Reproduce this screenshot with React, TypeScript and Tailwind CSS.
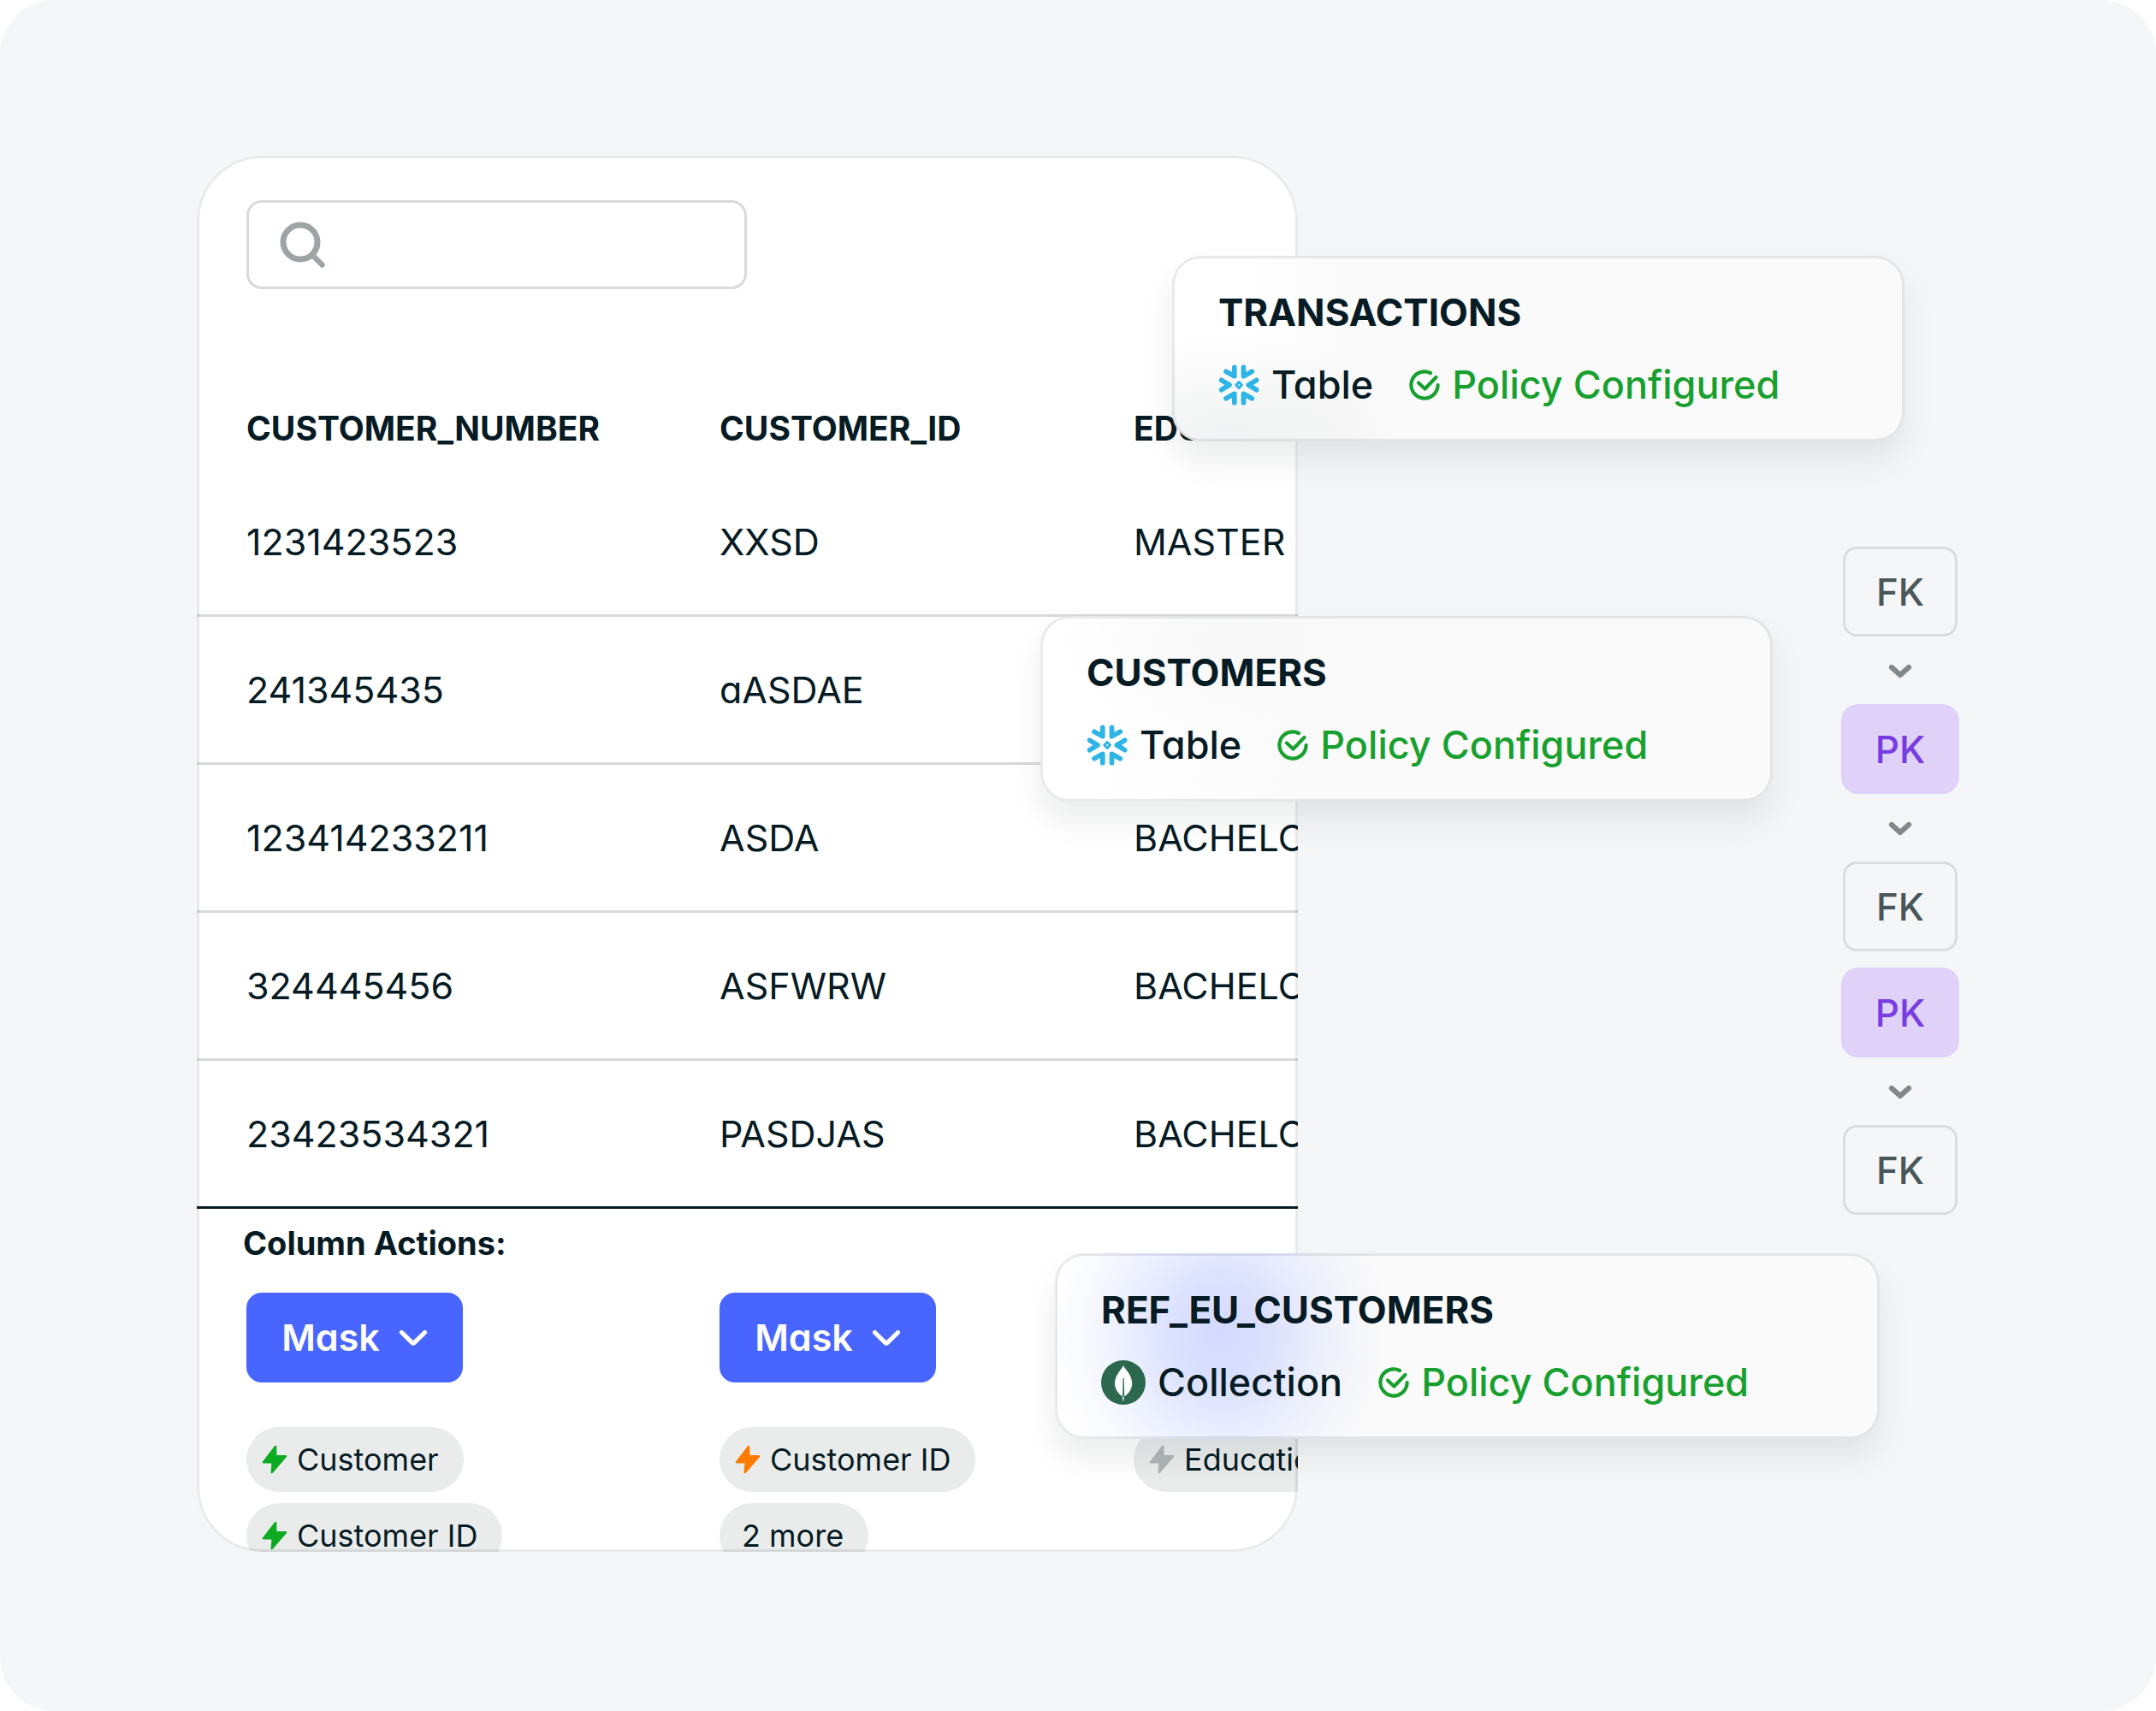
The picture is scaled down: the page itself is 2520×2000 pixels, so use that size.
import type { ReactNode } from 'react';

const rows = [
  { number: '1231423523', id: 'XXSD', education: 'MASTER' },
  { number: '241345435', id: 'aASDAE', education: 'BACHELOR' },
  { number: '123414233211', id: 'ASDA', education: 'BACHELOR' },
  { number: '324445456', id: 'ASFWRW', education: 'BACHELOR' },
  { number: '23423534321', id: 'PASDJAS', education: 'BACHELOR' },
];

function SearchIcon() {
  return (
    <svg className="size-[56px] shrink-0" viewBox="0 0 56 56" fill="none" stroke="#9da4a5" aria-hidden="true">
      <circle cx="26" cy="25" r="20" strokeWidth="7" />
      <path d="M41 41 51.5 51.5" strokeWidth="6.4" strokeLinecap="round" />
    </svg>
  );
}

function ChevronIcon() {
  return (
    <svg className="h-[20px] w-[34px]" viewBox="0 0 34 20" fill="none" aria-hidden="true">
      <path d="M3.5 3.5 15.900 15.600a1.600 1.600 0 0 0 2.200 0L30.500 3.500" stroke="currentColor" strokeWidth="5.2" strokeLinecap="round" />
    </svg>
  );
}

function ArrowDown() {
  return (
    <div className="flex h-[79px] items-center justify-center pt-[3px]">
      <svg className="h-[18px] w-[28px]" viewBox="0 0 28 18" fill="none" aria-hidden="true">
        <path d="m4 4 10 9 10-9" stroke="#7f888a" strokeWidth="6.2" strokeLinecap="round" strokeLinejoin="round" />
      </svg>
    </div>
  );
}

function Bolt({ className }: { className: string }) {
  return (
    <svg className={`h-[34px] w-[30px] ${className}`} viewBox="0 0 30 34" aria-hidden="true">
      <path
        d="M16 2 2 20.2h10.8l-1 11.8L28 13.2H16.2z"
        fill="currentColor"
        stroke="currentColor"
        strokeWidth="2.6"
        strokeLinejoin="round"
      />
    </svg>
  );
}

function CheckCircle() {
  return (
    <svg className="size-[36px] shrink-0" viewBox="0 0 36 36" fill="none" stroke="currentColor" strokeWidth="4.2" strokeLinecap="round" aria-hidden="true">
      <path d="M25 4A15.6 15.6 0 1 0 33.6 18" />
      <path d="m11 15.5 7.5 7L31.5 9" strokeLinejoin="round" />
    </svg>
  );
}

function Snowflake() {
  return (
    <svg className="size-[48px] shrink-0" viewBox="-2 -2 144 144" fill="none" stroke="#2fb4e6" strokeWidth="17" strokeLinecap="round" strokeLinejoin="round" aria-hidden="true">
      <path d="M54.500 8V39L25 23" />
      <path d="M86.500 8V39L116 23" />
      <path d="M54.500 132V101L25 117" />
      <path d="M86.500 132V101L116 117" />
      <path d="M9 53 37 70 9 87" />
      <path d="M132 53 104 70 132 87" />
      <path d="M70.500 60 80.500 70 70.500 80 60.500 70z" strokeWidth="9" />
    </svg>
  );
}

function LeafBadge() {
  return (
    <svg className="size-[52px] shrink-0" viewBox="0 0 52 52" aria-hidden="true">
      <circle cx="26" cy="26" r="26" fill="#2b684e" />
      <path d="M26 6c1.4 3.2 3.4 4.8 5.2 7.6 3 4.6 5 8.6 5 13.4 0 7-4 12-9.4 15.6l-.4 5h-1l-.4-5C19.8 38.8 16 33.6 16 27c0-5 2-9.2 5-13.6C22.8 10.8 25 9 26 6z" fill="#fff" />
      <path d="M26.2 21 25.4 42.4h1.4z" fill="#2b684e" stroke="#2b684e" strokeWidth="0.8" />
    </svg>
  );
}

function MaskButton() {
  return (
    <button type="button" className="flex h-[105px] w-[253px] items-center justify-center gap-[22px] rounded-[18px] bg-[#4866ff] text-[43px] font-semibold text-white">
      Mask
      <ChevronIcon />
    </button>
  );
}

function Chip({ bolt, children }: { bolt?: string; children: ReactNode }) {
  return (
    <li className={`flex h-[76px] items-center gap-[11px] rounded-full bg-[#eaecec] pr-[29px] text-[36px] ${bolt ? 'pl-[18px]' : 'pl-[26px]'}`}>
      {bolt && <Bolt className={bolt} />}
      {children}
    </li>
  );
}

function Chips({ children }: { children: ReactNode }) {
  return <ul className="flex flex-col items-start gap-[13px]">{children}</ul>;
}

function DataCard({ title, kind, icon, className }: { title: string; kind: string; icon: ReactNode; className: string }) {
  return (
    <article className={`absolute rounded-[34px] border-[3px] border-[#071b24]/9 bg-[#fafafa] bg-origin-border px-[51px] pt-[33px] pb-[36px] shadow-[0_22px_38px_rgba(0,20,30,0.08)] ${className}`}>
      <h2 className="text-[44px] leading-[60px] font-bold">{title}</h2>
      <div className="mt-[28px] flex h-[54px] items-center gap-[42px] text-[45px] font-medium">
        <span className="flex items-center gap-[14px]">
          {icon}
          {kind}
        </span>
        <span className="flex items-center gap-[14px] text-[#18a02f]">
          <CheckCircle />
          Policy Configured
        </span>
      </div>
    </article>
  );
}

function KeyBox({ type }: { type: 'FK' | 'PK' }) {
  return (
    <div
      className={`flex h-[105px] items-center justify-center text-[44px] font-medium ${
        type === 'PK' ? 'rounded-[20px] bg-[#dfd1f8] text-[#783de2]' : 'mx-[2px] rounded-[16px] border-[3px] border-[#dadcde] text-[#4a5758]'
      }`}
    >
      {type}
    </div>
  );
}

export default function App() {
  return (
    <div className="bg-white font-['Inter','Liberation_Sans',sans-serif] text-[#071b24] [font-feature-settings:'cv11']">
      <main className="relative flex min-h-screen items-start gap-[635px] overflow-hidden rounded-[64px] bg-[#f4f6f8] px-[230px] pt-[182px] pb-[184px]">
        <section className="relative min-w-0 flex-1 overflow-hidden rounded-[76px] bg-white">
          {/* Search */}
          <label className="mt-[52px] ml-[58px] flex h-[104px] w-[585px] items-center gap-[20px] rounded-[18px] border-[3px] border-[#d9dada] px-[34px]">
            <SearchIcon />
            <input type="text" aria-label="Search columns" className="w-full min-w-0 text-[40px] outline-none" />
          </label>

          {/* Table */}
          <table className="mt-[117px] -mb-[19px] w-full table-fixed border-separate border-spacing-0 text-left whitespace-nowrap">
            <colgroup>
              <col className="w-[611px]" />
              <col className="w-[484px]" />
              <col />
            </colgroup>
            <thead>
              <tr className="h-[93px] text-[39px]">
                <th className="pl-[58px] font-bold">CUSTOMER_NUMBER</th>
                <th className="font-bold">CUSTOMER_ID</th>
                <th className="font-bold">EDUCATION</th>
              </tr>
            </thead>
            <tbody className="text-[43px]">
              {rows.map((row) => (
                <tr
                  key={row.number}
                  className="h-[173px] *:border-b-[3px] *:border-[#d7d9da] last:*:border-[#071b24]"
                >
                  <td className="pl-[58px]">{row.number}</td>
                  <td>{row.id}</td>
                  <td>{row.education}</td>
                </tr>
              ))}
            </tbody>
            <tfoot>
              <tr className="h-[80px]">
                <th colSpan={3} className="pl-[54px] text-[38px] font-bold">
                  Column Actions:
                </th>
              </tr>
              <tr className="*:pt-[18px]">
                <td className="pl-[58px]">
                  <MaskButton />
                </td>
                <td>
                  <MaskButton />
                </td>
                <td />
              </tr>
              <tr className="align-top *:pt-[52px]">
                <td className="pl-[58px]">
                  <Chips>
                    <Chip bolt="text-[#0cab22]">Customer</Chip>
                    <Chip bolt="text-[#0cab22]">Customer ID</Chip>
                  </Chips>
                </td>
                <td>
                  <Chips>
                    <Chip bolt="text-[#ff7b00]">Customer ID</Chip>
                    <Chip>2 more</Chip>
                  </Chips>
                </td>
                <td>
                  <Chips>
                    <Chip bolt="text-[#b0b5b5]">Education</Chip>
                  </Chips>
                </td>
              </tr>
            </tfoot>
          </table>

          {/* Outline goes over the clipped content */}
          <div className="pointer-events-none absolute inset-0 rounded-[76px] border-[3px] border-[#071b24]/9" />
        </section>

        {/* Key relations */}
        <aside className="mt-[457px] w-[138px] shrink-0">
          <KeyBox type="FK" />
          <ArrowDown />
          <KeyBox type="PK" />
          <ArrowDown />
          <KeyBox type="FK" />
          <div className="h-[19px]" />
          <KeyBox type="PK" />
          <ArrowDown />
          <KeyBox type="FK" />
        </aside>

        {/* Floating cards */}
        <DataCard
          title="TRANSACTIONS"
          kind="Table"
          icon={<Snowflake />}
          className="top-[299px] left-[1370px] w-[856px] bg-[radial-gradient(ellipse_190px_130px_at_70px_100%,rgba(7,27,36,0.06),rgba(7,27,36,0.03)_50%,transparent),linear-gradient(to_right,#ffffff_90px,#fafafa_200px)]"
        />
        <DataCard
          title="CUSTOMERS"
          kind="Table"
          icon={<Snowflake />}
          className="top-[720px] left-[1216px] w-[856px] bg-[radial-gradient(ellipse_180px_110px_at_190px_30px,rgba(7,27,36,0.02),transparent),linear-gradient(to_right,#ffffff_60px,#fafafa_300px)]"
        />
        <DataCard
          title="REF_EU_CUSTOMERS"
          kind="Collection"
          icon={<LeafBadge />}
          className="top-[1465px] left-[1233px] w-[964px] bg-[radial-gradient(ellipse_200px_220px_at_190px_95px,rgba(72,102,255,0.24),rgba(72,102,255,0.20)_25%,rgba(72,102,255,0.11)_52%,rgba(72,102,255,0.03)_80%,transparent),linear-gradient(to_right,#ffffff_160px,#fafafa_360px)]"
        />
      </main>
    </div>
  );
}
